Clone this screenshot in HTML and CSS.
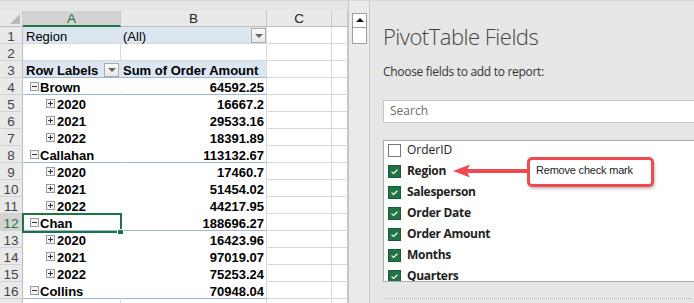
FILE: index.html
```html
<!DOCTYPE html>
<html>
<head>
<meta charset="utf-8">
<link rel="stylesheet" href="styles.css">
</head>
<body>
<div class="app">
  <div class="sheet">
    <div class="topstrip"></div>
    <div class="row hdr">
      <div class="c rh corner"><span class="tri"></span></div>
      <div class="c ca hsel">A</div>
      <div class="c cb">B</div>
      <div class="c cc">C</div>
      <div class="c cd"></div>
    </div>
    <div class="row">
      <div class="c rh">1</div>
      <div class="c ca pa ph">Region</div>
      <div class="c cb ph ddcell"><span class="bpad">(All)</span><span class="dd"></span></div>
      <div class="c cc"></div><div class="c cd"></div>
    </div>
    <div class="row">
      <div class="c rh">2</div>
      <div class="c ca"></div>
      <div class="c cb"></div>
      <div class="c cc"></div><div class="c cd"></div>
    </div>
    <div class="row">
      <div class="c rh">3</div>
      <div class="c ca pa ph grp b ddcell"><span>Row Labels</span><span class="dd dd-a"></span></div>
      <div class="c cb ph grp b bpad">Sum of Order Amount</div>
      <div class="c cc"></div><div class="c cd"></div>
    </div>
    <div class="row">
      <div class="c rh">4</div>
      <div class="c ca pa pv grp b lv1"><svg class="tg" width="9" height="9" viewBox="0 0 9 9"><rect x=".5" y=".5" width="8" height="8"/><path d="M2 4.5h5"/></svg>Brown</div>
      <div class="c cb pv grp b num">64592.25</div>
      <div class="c cc"></div><div class="c cd"></div>
    </div>
    <div class="row">
      <div class="c rh">5</div>
      <div class="c ca pa pv b lv2"><svg class="tg" width="9" height="9" viewBox="0 0 9 9"><rect x=".5" y=".5" width="8" height="8"/><path d="M2 4.5h5M4.5 2v5"/></svg>2020</div>
      <div class="c cb pv b num">16667.2</div>
      <div class="c cc"></div><div class="c cd"></div>
    </div>
    <div class="row">
      <div class="c rh">6</div>
      <div class="c ca pa pv b lv2"><svg class="tg" width="9" height="9" viewBox="0 0 9 9"><rect x=".5" y=".5" width="8" height="8"/><path d="M2 4.5h5M4.5 2v5"/></svg>2021</div>
      <div class="c cb pv b num">29533.16</div>
      <div class="c cc"></div><div class="c cd"></div>
    </div>
    <div class="row">
      <div class="c rh">7</div>
      <div class="c ca pa pv b lv2"><svg class="tg" width="9" height="9" viewBox="0 0 9 9"><rect x=".5" y=".5" width="8" height="8"/><path d="M2 4.5h5M4.5 2v5"/></svg>2022</div>
      <div class="c cb pv b num">18391.89</div>
      <div class="c cc"></div><div class="c cd"></div>
    </div>
    <div class="row">
      <div class="c rh">8</div>
      <div class="c ca pa pv grp b lv1"><svg class="tg" width="9" height="9" viewBox="0 0 9 9"><rect x=".5" y=".5" width="8" height="8"/><path d="M2 4.5h5"/></svg>Callahan</div>
      <div class="c cb pv grp b num">113132.67</div>
      <div class="c cc"></div><div class="c cd"></div>
    </div>
    <div class="row">
      <div class="c rh">9</div>
      <div class="c ca pa pv b lv2"><svg class="tg" width="9" height="9" viewBox="0 0 9 9"><rect x=".5" y=".5" width="8" height="8"/><path d="M2 4.5h5M4.5 2v5"/></svg>2020</div>
      <div class="c cb pv b num">17460.7</div>
      <div class="c cc"></div><div class="c cd"></div>
    </div>
    <div class="row">
      <div class="c rh">10</div>
      <div class="c ca pa pv b lv2"><svg class="tg" width="9" height="9" viewBox="0 0 9 9"><rect x=".5" y=".5" width="8" height="8"/><path d="M2 4.5h5M4.5 2v5"/></svg>2021</div>
      <div class="c cb pv b num">51454.02</div>
      <div class="c cc"></div><div class="c cd"></div>
    </div>
    <div class="row">
      <div class="c rh">11</div>
      <div class="c ca pa pv b lv2"><svg class="tg" width="9" height="9" viewBox="0 0 9 9"><rect x=".5" y=".5" width="8" height="8"/><path d="M2 4.5h5M4.5 2v5"/></svg>2022</div>
      <div class="c cb pv b num">44217.95</div>
      <div class="c cc"></div><div class="c cd"></div>
    </div>
    <div class="row">
      <div class="c rh rsel">12</div>
      <div class="c ca pa pv grp b lv1"><svg class="tg" width="9" height="9" viewBox="0 0 9 9"><rect x=".5" y=".5" width="8" height="8"/><path d="M2 4.5h5"/></svg>Chan</div>
      <div class="c cb pv grp b num">188696.27</div>
      <div class="c cc"></div><div class="c cd"></div>
    </div>
    <div class="row">
      <div class="c rh">13</div>
      <div class="c ca pa pv b lv2"><svg class="tg" width="9" height="9" viewBox="0 0 9 9"><rect x=".5" y=".5" width="8" height="8"/><path d="M2 4.5h5M4.5 2v5"/></svg>2020</div>
      <div class="c cb pv b num">16423.96</div>
      <div class="c cc"></div><div class="c cd"></div>
    </div>
    <div class="row">
      <div class="c rh">14</div>
      <div class="c ca pa pv b lv2"><svg class="tg" width="9" height="9" viewBox="0 0 9 9"><rect x=".5" y=".5" width="8" height="8"/><path d="M2 4.5h5M4.5 2v5"/></svg>2021</div>
      <div class="c cb pv b num">97019.07</div>
      <div class="c cc"></div><div class="c cd"></div>
    </div>
    <div class="row">
      <div class="c rh">15</div>
      <div class="c ca pa pv b lv2"><svg class="tg" width="9" height="9" viewBox="0 0 9 9"><rect x=".5" y=".5" width="8" height="8"/><path d="M2 4.5h5M4.5 2v5"/></svg>2022</div>
      <div class="c cb pv b num">75253.24</div>
      <div class="c cc"></div><div class="c cd"></div>
    </div>
    <div class="row">
      <div class="c rh">16</div>
      <div class="c ca pa pv grp b lv1"><svg class="tg" width="9" height="9" viewBox="0 0 9 9"><rect x=".5" y=".5" width="8" height="8"/><path d="M2 4.5h5"/></svg>Collins</div>
      <div class="c cb pv grp b num">70948.04</div>
      <div class="c cc"></div><div class="c cd"></div>
    </div>
    <div class="row">
      <div class="c rh"></div>
      <div class="c ca"></div>
      <div class="c cb"></div>
      <div class="c cc"></div><div class="c cd"></div>
    </div>
  </div>
  <div class="vscroll">
    <div class="sbtn"></div>
    <div class="sthumb"></div>
  </div>
  <div class="pane">
    <div class="title">PivotTable Fields</div>
    <div class="sub">Choose fields to add to report:</div>
    <div class="search">Search</div>
    <div class="list">
      <div class="item"><svg class="cb-box" width="13" height="13" viewBox="0 0 13 13"><rect class="off" x=".5" y=".5" width="12" height="12"/></svg><span>OrderID</span></div>
      <div class="item on"><svg class="cb-box" width="13" height="13" viewBox="0 0 13 13"><rect class="chk" x=".5" y=".5" width="12" height="12"/><path class="tick" d="M3.6 6.6l2 1.8 3.8-3.6"/></svg><span>Region</span></div>
      <div class="item on"><svg class="cb-box" width="13" height="13" viewBox="0 0 13 13"><rect class="chk" x=".5" y=".5" width="12" height="12"/><path class="tick" d="M3.6 6.6l2 1.8 3.8-3.6"/></svg><span>Salesperson</span></div>
      <div class="item on"><svg class="cb-box" width="13" height="13" viewBox="0 0 13 13"><rect class="chk" x=".5" y=".5" width="12" height="12"/><path class="tick" d="M3.6 6.6l2 1.8 3.8-3.6"/></svg><span>Order Date</span></div>
      <div class="item on"><svg class="cb-box" width="13" height="13" viewBox="0 0 13 13"><rect class="chk" x=".5" y=".5" width="12" height="12"/><path class="tick" d="M3.6 6.6l2 1.8 3.8-3.6"/></svg><span>Order Amount</span></div>
      <div class="item on"><svg class="cb-box" width="13" height="13" viewBox="0 0 13 13"><rect class="chk" x=".5" y=".5" width="12" height="12"/><path class="tick" d="M3.6 6.6l2 1.8 3.8-3.6"/></svg><span>Months</span></div>
      <div class="item on"><svg class="cb-box" width="13" height="13" viewBox="0 0 13 13"><rect class="chk" x=".5" y=".5" width="12" height="12"/><path class="tick" d="M3.6 6.6l2 1.8 3.8-3.6"/></svg><span>Quarters</span></div>
    </div>
    <div class="dots"></div>
  </div>
</div>
<div class="selection"><span class="handle"></span></div>
<svg class="arrow" width="80" height="22" viewBox="0 0 80 22"><polygon points="3,11 20,4.5 17.5,9 79,9 79,13 17.5,13 20,17.5"/></svg>
<div class="callout">Remove check mark</div>
</body>
</html>
```
FILE: styles.css
```css
* { box-sizing: border-box; margin: 0; padding: 0; }
body {
  width: 694px;
  height: 303px;
  overflow: hidden;
  background: #e6e6e6;
  font-family: "Liberation Sans", Arial, sans-serif;
  position: relative;
}
.app {
  display: flex;
  height: 303px;
  border-top: 1px solid #d6d6d6;
}
.sheet {
  width: 348px;
  display: flex;
  flex-direction: column;
  overflow: hidden;
  flex: none;
}
.topstrip { height: 10px; background: #e6e6e6; flex: none; }
.row { display: flex; height: 17px; flex: none; }
.row.hdr { height: 16px; }
.c {
  height: 100%;
  border-right: 1px solid #d9d9d9;
  border-bottom: 1px solid #d9d9d9;
  background: #fff;
  font-size: 13px;
  line-height: 17px;
  padding-top: 1px;
  white-space: nowrap;
  color: #000;
  flex: none;
}
.rh { width: 23px; }
.ca { width: 98px; padding-left: 3px; }
.cb { width: 146px; }
.cc { width: 65px; }
.cd { width: 16px; border-right-color: #c4c4c4; }

.hdr .c {
  background: #e9e9e9;
  border-right-color: #c8c8c8;
  border-bottom-color: #bdbdbd;
  text-align: center;
  font-size: 13.5px;
  line-height: 15px;
  padding: 0;
  color: #222;
}
.hdr .hsel {
  background: #d3d3d3;
  color: #217346;
  border-bottom: 2px solid #217346;
}
.hdr .corner {
  display: flex;
  justify-content: flex-end;
  align-items: flex-end;
  padding: 0 2px 2px 0;
}
.tri {
  width: 0;
  height: 0;
  border-left: 10px solid transparent;
  border-bottom: 10px solid #b9b9b9;
}
.rh {
  background: #e9e9e9;
  border-right-color: #bdbdbd;
  border-bottom-color: #d2d2d2;
  text-align: center;
  font-size: 13.5px;
  color: #444;
}
.rh.rsel { background: #d3d3d3; color: #217346; }

.pa { border-right-color: transparent; }
.ph { background: #dce6f1; }
.pv { border-bottom-color: transparent; }
.grp { border-bottom-color: #9bb7db; }
.b { font-weight: bold; }
.num { text-align: right; padding-right: 2px; }
.bpad { padding-left: 2px; }
.lv1 { padding-left: 7px; }
.lv2 { padding-left: 23px; }

.tg {
  vertical-align: 1px;
  margin-right: 1px;
}
.lv2 .tg { margin-right: 2px; }
.tg rect { fill: #f4f4f4; stroke: #8e9aad; }
.tg path { stroke: #333; stroke-width: 1; fill: none; }

.ddcell {
  display: flex;
  justify-content: space-between;
  align-items: flex-start;
}
.dd {
  width: 15px;
  height: 15px;
  border: 1px solid #ababab;
  background: linear-gradient(#fafafa, #e9e9e9);
  display: flex;
  align-items: center;
  justify-content: center;
}
.dd::after {
  content: "";
  width: 0;
  height: 0;
  border-left: 4px solid transparent;
  border-right: 4px solid transparent;
  border-top: 4px solid #666;
}
.dd-a { height: 14px; margin-top: 1px; margin-right: 1px; }

.vscroll {
  width: 22px;
  flex: none;
  background: #ebebeb;
  border-left: 1px solid #c6c6c6;
  border-right: 1px solid #c8c8c8;
  padding: 12px 2px 0 3px;
}
.sbtn {
  height: 15px;
  background: #fff;
  border: 1px solid #9e9e9e;
  display: flex;
  justify-content: center;
  padding-top: 4px;
}
.sbtn::after {
  content: "";
  width: 0;
  height: 0;
  border-left: 4px solid transparent;
  border-right: 4px solid transparent;
  border-bottom: 4px solid #111;
}
.sthumb {
  height: 16px;
  background: #fff;
  border: 1px solid #9e9e9e;
  border-top: none;
}

.pane {
  flex: 1;
  overflow: hidden;
  padding-left: 13px;
  font-family: "Open Sans", "Noto Sans", sans-serif;
  color: #333;
}
.title {
  margin-top: 20px;
  font-size: 22px;
  font-weight: 300;
  line-height: 30px;
  letter-spacing: -0.5px;
  color: #444;
  white-space: nowrap;
}
.sub {
  margin-top: 13px;
  font-size: 12px;
  line-height: 16px;
  letter-spacing: -0.3px;
  color: #333;
  white-space: nowrap;
}
.search {
  margin-top: 20px;
  width: 340px;
  height: 23px;
  background: #fff;
  border: 1px solid #c6c6c6;
  padding-left: 6px;
  font-size: 12px;
  line-height: 19px;
  color: #6d6d6d;
}
.list {
  margin-top: 17px;
  width: 340px;
  height: 142px;
  background: #fff;
  border: 1px solid #ababab;
  overflow: hidden;
  padding-left: 4px;
}
.item {
  display: flex;
  align-items: flex-start;
  height: 21px;
  font-size: 12px;
  line-height: 17px;
  color: #222;
  white-space: nowrap;
}
.item.on { font-weight: bold; letter-spacing: -0.3px; }
.cb-box { margin-top: 3px; margin-right: 6px; flex: none; }
.cb-box .off { fill: #fff; stroke: #777; }
.cb-box .chk { fill: #217346; stroke: #1a5c37; }
.cb-box .tick { fill: none; stroke: #fff; stroke-width: 1.2; }
.dots {
  margin-top: 16px;
  margin-left: 2px;
  width: 340px;
  border-top: 1px dotted #bdbdbd;
}

.selection {
  position: absolute;
  left: 22px;
  top: 213px;
  width: 100px;
  height: 20px;
  border: 2px solid #217346;
}
.handle {
  position: absolute;
  left: 93px;
  top: 14px;
  width: 7px;
  height: 6px;
  background: #217346;
  border: 1px solid #fff;
}
.arrow {
  position: absolute;
  left: 450px;
  top: 160px;
}
.arrow polygon { fill: #ef4a50; }
.callout {
  position: absolute;
  left: 527px;
  top: 157px;
  width: 127px;
  height: 30px;
  background: #fff;
  border: 3px solid #ef4a50;
  border-radius: 5px;
  box-shadow: 1px 2px 3px rgba(0, 0, 0, 0.25);
  padding-left: 6px;
  font-size: 11px;
  line-height: 21px;
  letter-spacing: -0.2px;
  color: #222;
  white-space: nowrap;
}
```
